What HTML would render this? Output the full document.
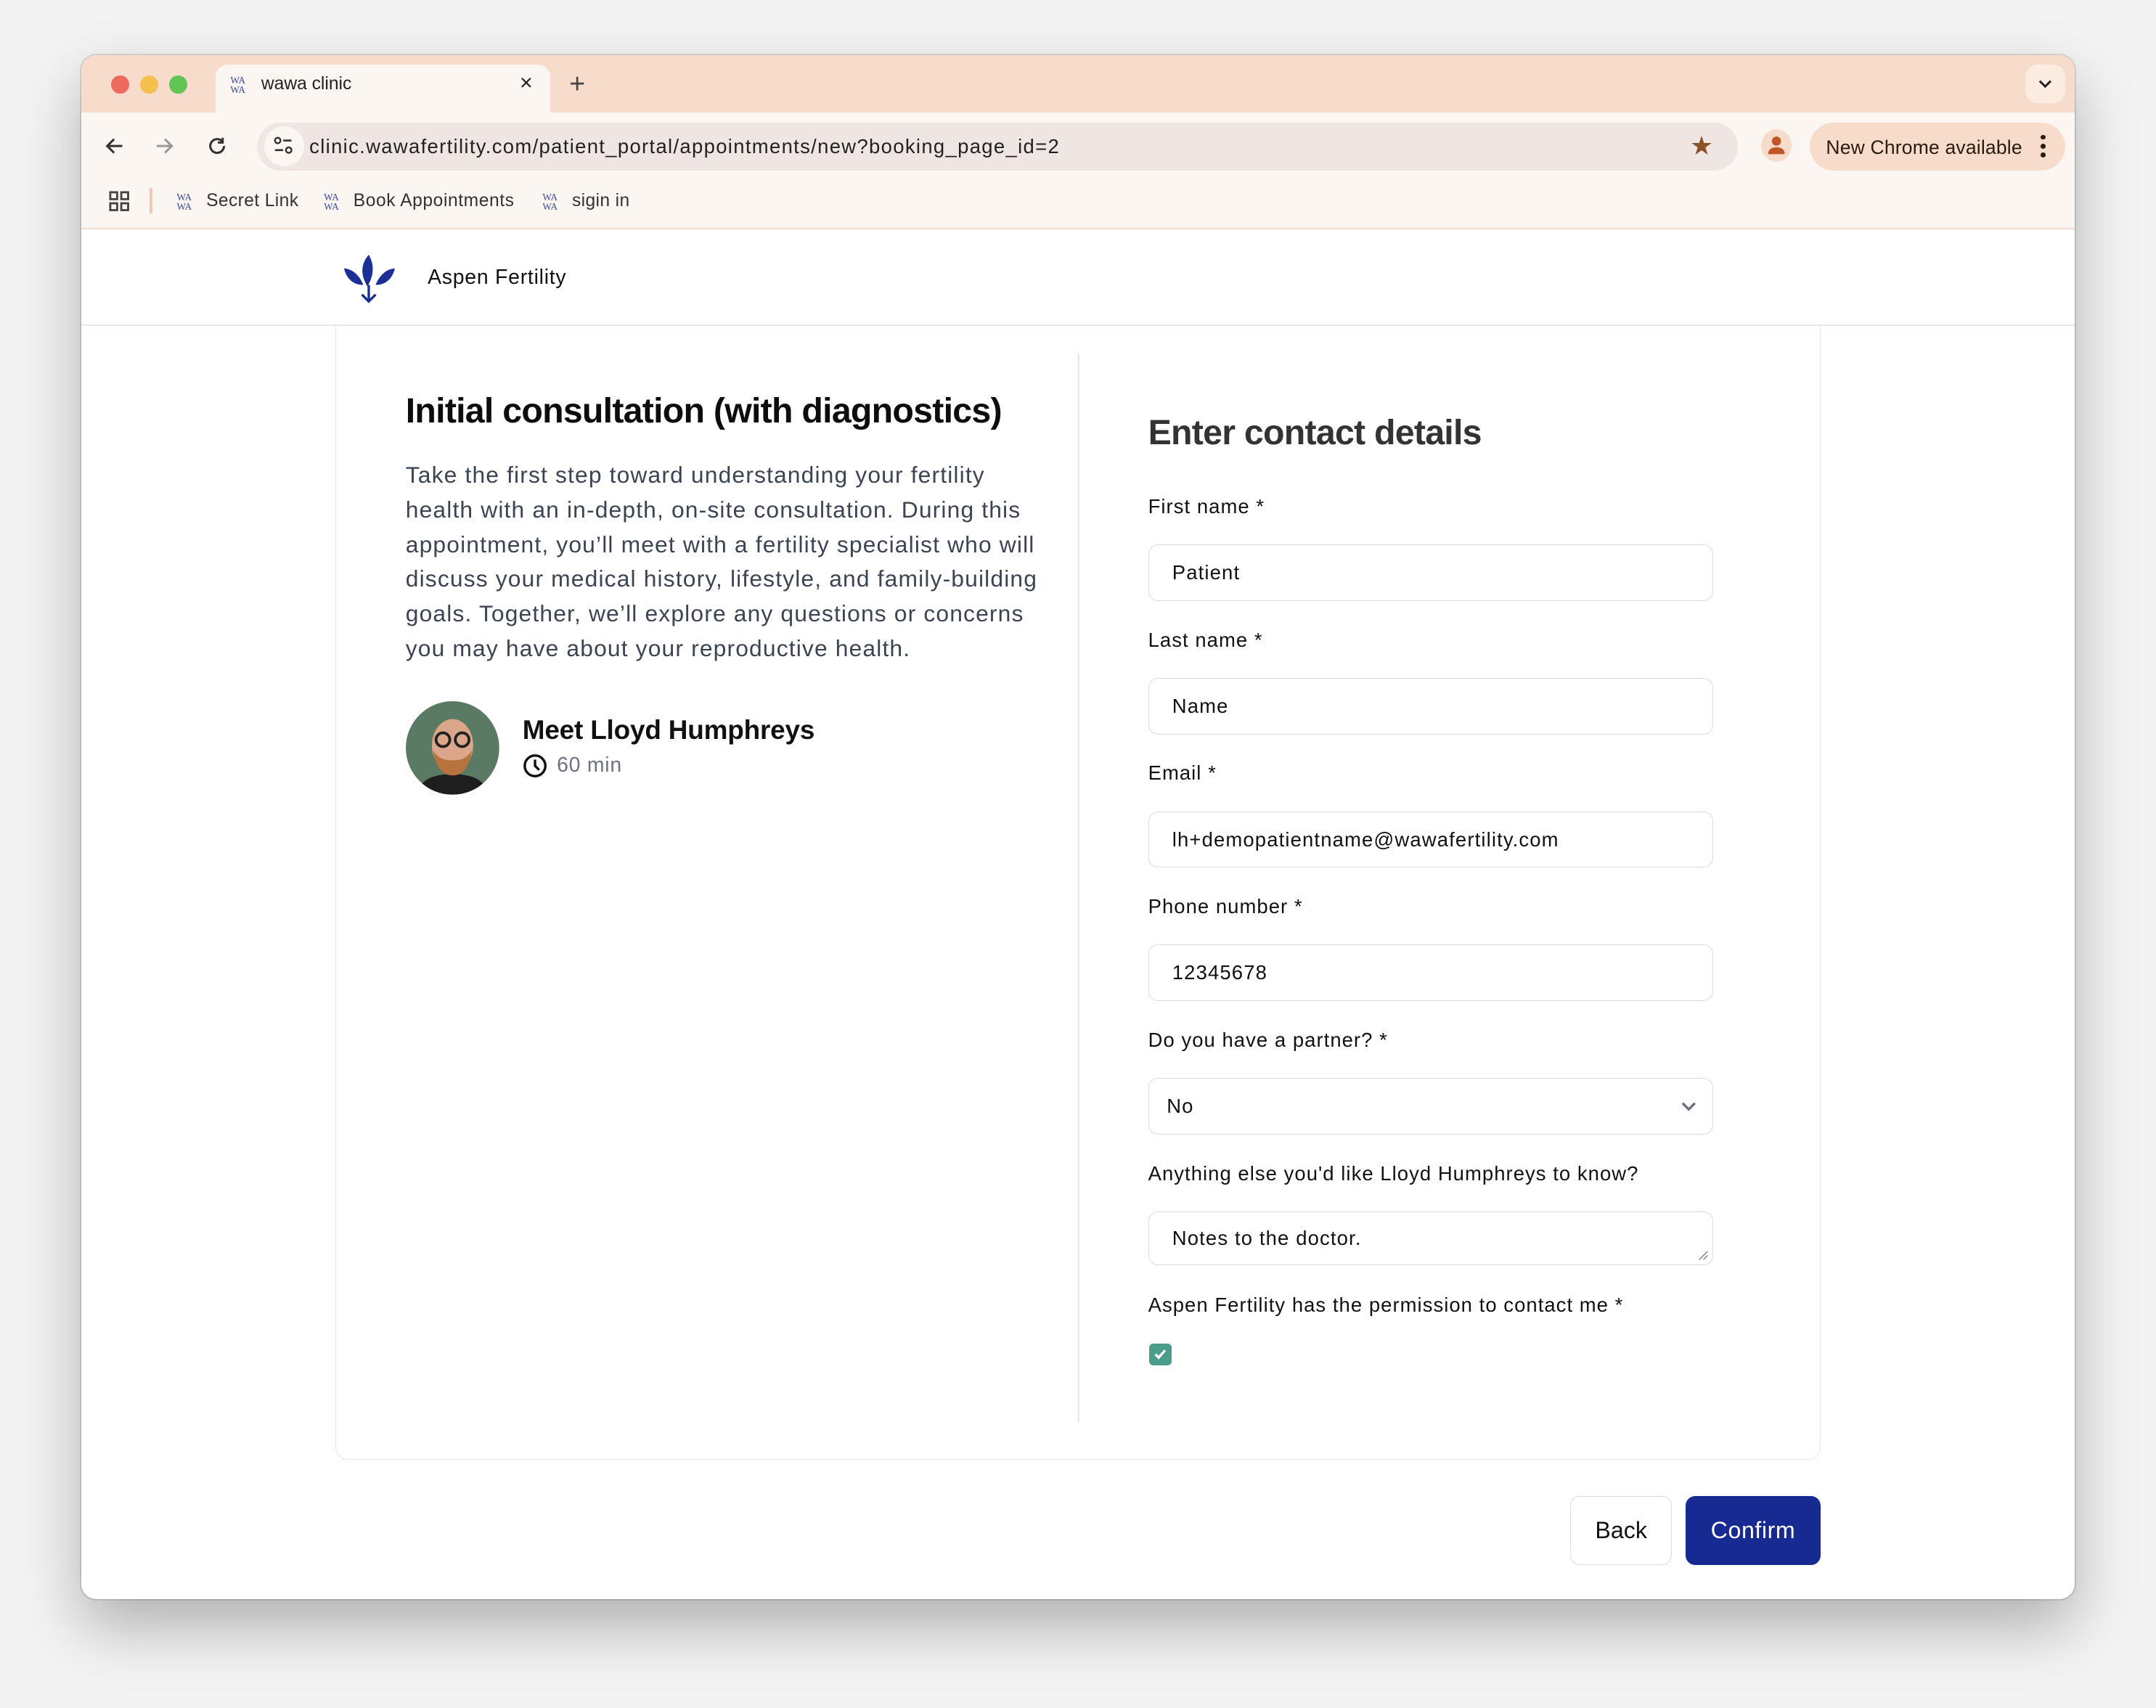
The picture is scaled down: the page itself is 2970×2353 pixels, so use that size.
<!DOCTYPE html>
<html><head><meta charset="utf-8">
<style>
html,body{margin:0;padding:0;}
body{width:1568px;height:1242px;zoom:1.89413;background:#f3f3f3;font-family:"Liberation Sans",Arial,sans-serif;position:relative;overflow:hidden;}
.a{position:absolute;}
.win{left:59px;top:40px;width:1450px;height:1123px;border-radius:11px;background:#fff;overflow:hidden;box-shadow:0 20px 45px rgba(0,0,0,.28),0 0 0 1px rgba(0,0,0,.12);}
.lbl{font-size:14.5px;color:#111;letter-spacing:0.55px;}
.inp{left:776px;width:410px;height:40px;border:1px solid #dcdce0;border-radius:7px;background:#fff;font-size:14.5px;color:#111;line-height:40px;text-indent:17px;letter-spacing:0.6px;}
.wa{font-family:"Liberation Serif",serif;font-size:7px;line-height:7px;color:#3a4a9a;display:inline-block;width:14px;text-align:center;}
</style></head><body>
<div class="a win">
  <div class="a" style="left:0;top:0;width:1450px;height:42px;background:#f8dccb;"></div>
  <div class="a" style="left:22px;top:15px;width:13px;height:13px;border-radius:50%;background:#ec6a5e;"></div>
  <div class="a" style="left:43px;top:15px;width:13px;height:13px;border-radius:50%;background:#f4bf4f;"></div>
  <div class="a" style="left:64px;top:15px;width:13px;height:13px;border-radius:50%;background:#61c554;"></div>
  <div class="a" style="left:98px;top:7px;width:243px;height:40px;background:#fcf6f2;border-radius:9px 9px 0 0;"></div>
  <div class="a" style="left:107px;top:14px;"><span class="wa">WA<br>WA</span></div>
  <div class="a" style="left:131px;top:14px;font-size:13px;color:#222;">wawa clinic</div>
  <div class="a" style="left:319px;top:12px;font-size:16px;color:#222;">×</div>
  <div class="a" style="left:355px;top:10px;font-size:20px;color:#444;">+</div>
  <div class="a" style="left:1414px;top:7px;width:29px;height:28px;border-radius:9px;background:#fcebe1;text-align:center;">
    <svg width="12" height="12" viewBox="0 0 12 12" style="margin-top:8px"><path d="M2 4l4 4 4-4" stroke="#222" stroke-width="1.6" fill="none"/></svg></div>
  <div class="a" style="left:0;top:42px;width:1450px;height:85px;background:#fcf6f2;"></div>
  <svg class="a" style="left:16px;top:58px" width="16" height="16" viewBox="0 0 16 16"><path d="M14 8H3M8 3L3 8l5 5" stroke="#333" stroke-width="1.6" fill="none"/></svg>
  <svg class="a" style="left:53px;top:58px" width="16" height="16" viewBox="0 0 16 16"><path d="M2 8h11M8 3l5 5-5 5" stroke="#999" stroke-width="1.6" fill="none"/></svg>
  <svg class="a" style="left:91px;top:58px" width="16" height="16" viewBox="0 0 16 16"><path d="M13 8a5 5 0 1 1-1.5-3.6M12 2v3.5H8.5" stroke="#333" stroke-width="1.6" fill="none"/></svg>
  <div class="a" style="left:128px;top:49px;width:1077px;height:35px;border-radius:18px;background:#efe5e2;"></div>
  <div class="a" style="left:133px;top:52px;width:29px;height:29px;border-radius:50%;background:#fcf6f2;"></div>
  <svg class="a" style="left:139px;top:58px" width="16" height="16" viewBox="0 0 16 16"><circle cx="4" cy="4" r="2" stroke="#333" stroke-width="1.3" fill="none"/><path d="M8 4h6M2 11h6" stroke="#333" stroke-width="1.4"/><circle cx="12" cy="11" r="2" stroke="#333" stroke-width="1.3" fill="none"/></svg>
  <div class="a" style="left:166px;top:58px;font-size:14.5px;color:#222;letter-spacing:0.7px;">clinic.wawafertility.com/patient_portal/appointments/new?booking_page_id=2</div>
  <div class="a" style="left:1170px;top:55px;font-size:19px;color:#8a5226;">★</div>
  <div class="a" style="left:1222px;top:54px;width:22px;height:24px;border-radius:50%;background:#f8dccb;"></div>
  <svg class="a" style="left:1225px;top:57px" width="16" height="18" viewBox="0 0 16 18"><circle cx="8" cy="5.5" r="3.3" fill="#c05626"/><path d="M2 15c0-4 3-5 6-5s6 1 6 5z" fill="#c05626"/></svg>
  <div class="a" style="left:1257px;top:49px;width:186px;height:35px;border-radius:18px;background:#f8dccb;"></div>
  <div class="a" style="left:1269px;top:59px;font-size:14px;color:#2a1a10;letter-spacing:0.1px;">New Chrome available</div>
  <div class="a" style="left:1425px;top:58px;width:4px;">
    <div style="width:3.5px;height:3.5px;border-radius:50%;background:#2a1a10;margin-bottom:3px"></div>
    <div style="width:3.5px;height:3.5px;border-radius:50%;background:#2a1a10;margin-bottom:3px"></div>
    <div style="width:3.5px;height:3.5px;border-radius:50%;background:#2a1a10;"></div></div>
  <svg class="a" style="left:20px;top:99px" width="15" height="15" viewBox="0 0 15 15" fill="none" stroke="#444" stroke-width="1.5"><rect x="1" y="1" width="5" height="5"/><rect x="9" y="1" width="5" height="5"/><rect x="1" y="9" width="5" height="5"/><rect x="9" y="9" width="5" height="5"/></svg>
  <div class="a" style="left:50px;top:97px;width:2px;height:18px;background:#f3c9b6;"></div>
  <div class="a" style="left:68px;top:99px;"><span class="wa">WA<br>WA</span></div>
  <div class="a" style="left:91px;top:99px;font-size:13px;color:#333;letter-spacing:0.2px;">Secret Link</div>
  <div class="a" style="left:175px;top:99px;"><span class="wa">WA<br>WA</span></div>
  <div class="a" style="left:198px;top:99px;font-size:13px;color:#333;letter-spacing:0.3px;">Book Appointments</div>
  <div class="a" style="left:334px;top:99px;"><span class="wa">WA<br>WA</span></div>
  <div class="a" style="left:357px;top:99px;font-size:13px;color:#333;letter-spacing:0.2px;">sigin in</div>
  <div class="a" style="left:0;top:126px;width:1450px;height:1px;background:#ecdcd4;"></div>
  <div class="a" style="left:0;top:196px;width:1450px;height:1px;background:#e5e7eb;"></div>
  <svg class="a" style="left:190px;top:144px" width="40" height="38" viewBox="0 0 40 38"><path d="M19 1c-6 7-6 15-1 23 5-8 5-16 1-23z" fill="#1c2f96"/><path d="M1 11c5 0 11 4 14 12-7 0-12-4-14-12z" fill="#1c2f96"/><path d="M38 11c-5 0-11 4-14 12 7 0 12-4 14-12z" fill="#1c2f96"/><path d="M19 23v12M14 30l5 5 5-5" stroke="#1c2f96" stroke-width="1.8" fill="none"/></svg>
  <div class="a" style="left:252px;top:153px;font-size:15px;color:#111;letter-spacing:0.4px;">Aspen Fertility</div>
  <div class="a" style="left:185px;top:196px;width:1079px;height:825px;border:1px solid #e5e7eb;border-top:none;border-radius:0 0 9px 9px;"></div>
  <div class="a" style="left:725px;top:217px;width:1px;height:778px;background:#e5e7eb;"></div>
  <div class="a" style="left:236px;top:244px;font-size:25.5px;font-weight:bold;color:#0d0d0d;letter-spacing:-0.4px;">Initial consultation (with diagnostics)</div>
  <div class="a" style="left:236px;top:293px;white-space:nowrap;font-size:16.8px;line-height:25.3px;color:#3c4454;letter-spacing:0.6px;">Take the first step toward understanding your fertility<br>health with an in-depth, on-site consultation. During this<br>appointment, you’ll meet with a fertility specialist who will<br>discuss your medical history, lifestyle, and family-building<br>goals. Together, we’ll explore any questions or concerns<br>you may have about your reproductive health.</div>
  <svg class="a" style="left:236px;top:470px" width="68" height="68" viewBox="0 0 68 68"><defs><clipPath id="c"><circle cx="34" cy="34" r="34"/></clipPath></defs><g clip-path="url(#c)"><rect width="68" height="68" fill="#5a7a64"/><path d="M8 68c2-12 14-15 26-15s24 3 26 15z" fill="#1e1e1e"/><ellipse cx="34" cy="32" rx="15" ry="19" fill="#dca68a"/><path d="M20 36c2 14 8 18 14 18s12-4 14-18c-4 6-8 7-14 7s-10-1-14-7z" fill="#b8723e"/><circle cx="27" cy="28" r="5" fill="none" stroke="#222" stroke-width="2"/><circle cx="41" cy="28" r="5" fill="none" stroke="#222" stroke-width="2"/></g></svg>
  <div class="a" style="left:321px;top:480px;font-size:19.5px;font-weight:bold;color:#111;letter-spacing:-0.1px;">Meet Lloyd Humphreys</div>
  <svg class="a" style="left:321px;top:508px" width="18" height="18" viewBox="0 0 18 18"><circle cx="9" cy="9" r="7.5" stroke="#111" stroke-width="1.8" fill="none"/><path d="M9 4.5V9l3 3" stroke="#111" stroke-width="1.8" fill="none"/></svg>
  <div class="a" style="left:346px;top:508px;font-size:15px;color:#6b7280;letter-spacing:0.4px;">60 min</div>
  <div class="a" style="left:776px;top:260px;font-size:25.5px;font-weight:bold;color:#333;letter-spacing:-0.4px;">Enter contact details</div>
  <div class="a lbl" style="left:776px;top:320px;">First name *</div>
  <div class="a inp" style="top:356px;">Patient</div>
  <div class="a lbl" style="left:776px;top:417px;">Last name *</div>
  <div class="a inp" style="top:453px;">Name</div>
  <div class="a lbl" style="left:776px;top:514px;">Email *</div>
  <div class="a inp" style="top:550px;">lh+demopatientname@wawafertility.com</div>
  <div class="a lbl" style="left:776px;top:611px;">Phone number *</div>
  <div class="a inp" style="top:647px;">12345678</div>
  <div class="a lbl" style="left:776px;top:708px;">Do you have a partner? *</div>
  <div class="a inp" style="top:744px;text-indent:13px;">No</div>
  <svg class="a" style="left:1163px;top:760px" width="12" height="10" viewBox="0 0 12 10"><path d="M1.5 2.5l4.5 4.5 4.5-4.5" stroke="#6b7280" stroke-width="1.8" fill="none"/></svg>
  <div class="a lbl" style="left:776px;top:805px;">Anything else you'd like Lloyd Humphreys to know?</div>
  <div class="a inp" style="top:841px;height:38px;line-height:38px;">Notes to the doctor.</div>
  <svg class="a" style="left:1176px;top:869px" width="8" height="8" viewBox="0 0 8 8"><path d="M1 7L7 1M4 7L7 4" stroke="#888" stroke-width="0.8"/></svg>
  <div class="a lbl" style="left:776px;top:901px;">Aspen Fertility has the permission to contact me *</div>
  <div class="a" style="left:777px;top:937px;width:16px;height:16px;border-radius:3px;background:#4a9d8a;"></div>
  <svg class="a" style="left:779px;top:939px" width="12" height="12" viewBox="0 0 12 12"><path d="M2.5 6.2l2.3 2.4L9.5 3.3" stroke="#fff" stroke-width="1.8" fill="none"/></svg>
  <div class="a" style="left:1083px;top:1048px;width:73px;height:49px;border:1px solid #dcdce0;border-radius:7px;text-align:center;line-height:49px;font-size:17px;color:#111;">Back</div>
  <div class="a" style="left:1167px;top:1048px;width:98px;height:50px;border-radius:7px;background:#172a92;text-align:center;line-height:50px;font-size:17px;color:#fff;letter-spacing:0.3px;">Confirm</div>
</div>
</body></html>
